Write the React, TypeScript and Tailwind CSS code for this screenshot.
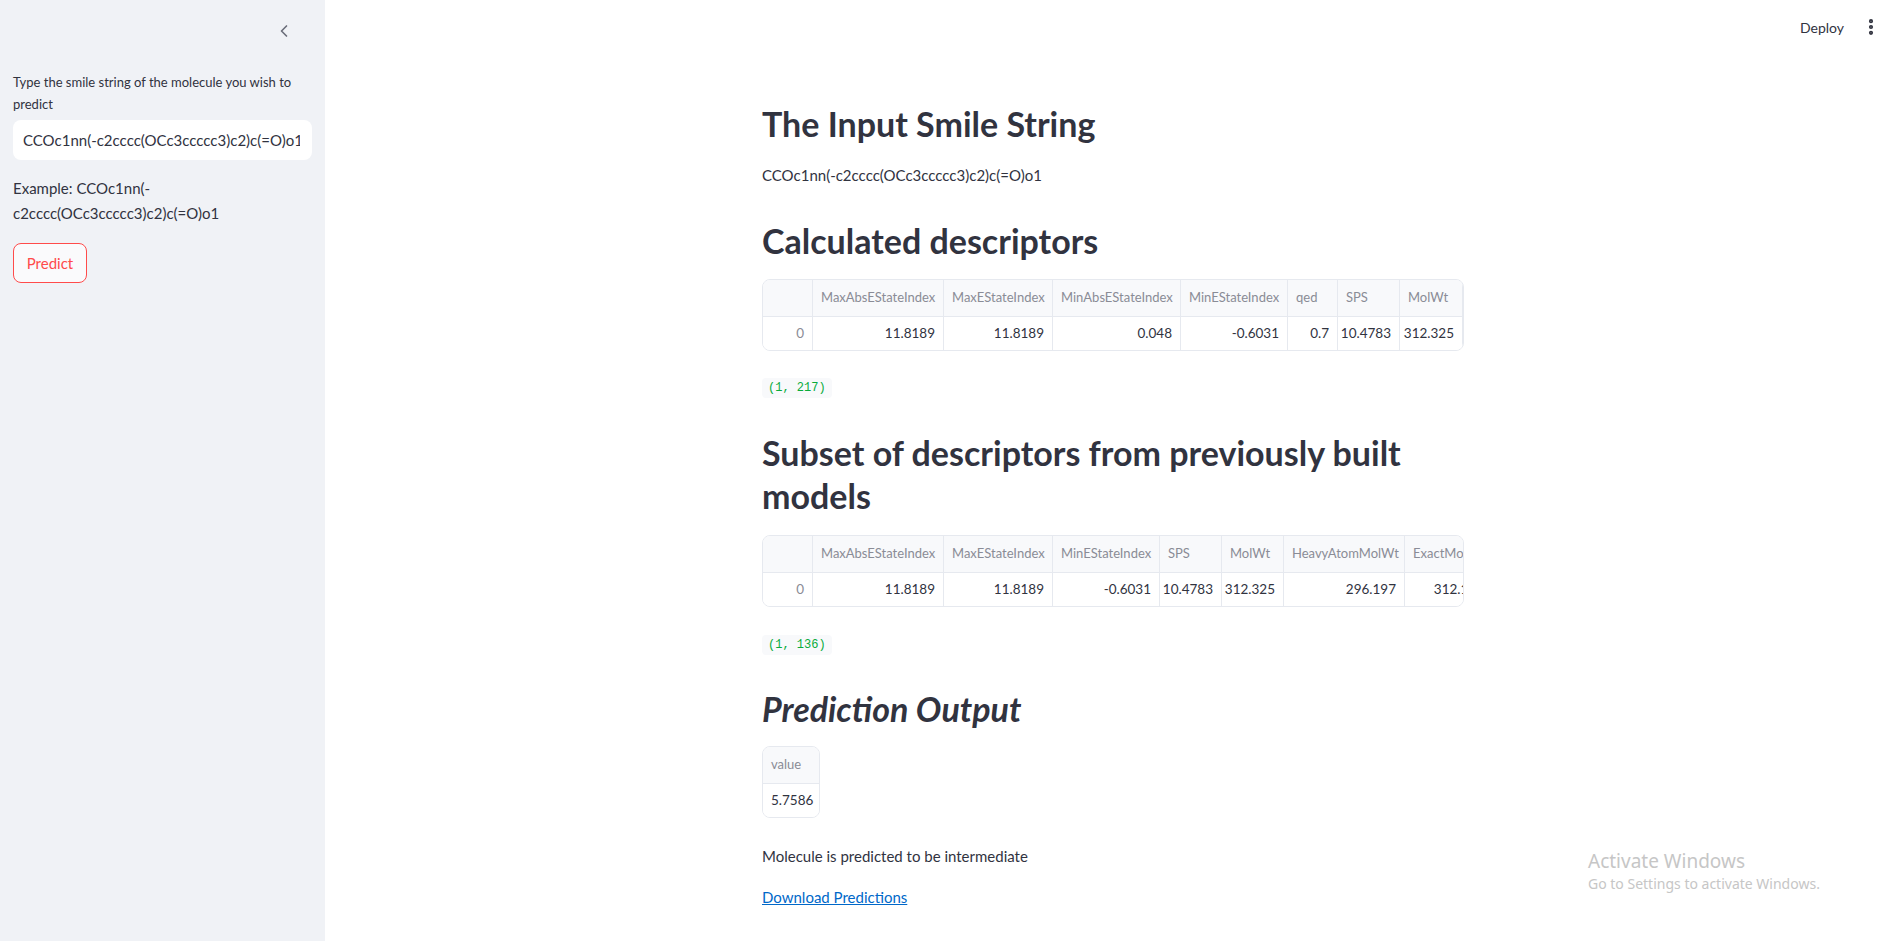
import { ChevronLeft, EllipsisVertical } from 'lucide-react'

type Col = { label: string; value: string; w: number }

const calculated: Col[] = [
  { label: 'MaxAbsEStateIndex', value: '11.8189', w: 131 },
  { label: 'MaxEStateIndex', value: '11.8189', w: 109 },
  { label: 'MinAbsEStateIndex', value: '0.048', w: 128 },
  { label: 'MinEStateIndex', value: '-0.6031', w: 107 },
  { label: 'qed', value: '0.7', w: 50 },
  { label: 'SPS', value: '10.4783', w: 62 },
  { label: 'MolWt', value: '312.325', w: 63 },
  { label: 'HeavyAtomMolWt', value: '296.197', w: 121 },
]

const subset: Col[] = [
  { label: 'MaxAbsEStateIndex', value: '11.8189', w: 131 },
  { label: 'MaxEStateIndex', value: '11.8189', w: 109 },
  { label: 'MinEStateIndex', value: '-0.6031', w: 107 },
  { label: 'SPS', value: '10.4783', w: 62 },
  { label: 'MolWt', value: '312.325', w: 62 },
  { label: 'HeavyAtomMolWt', value: '296.197', w: 121 },
  { label: 'ExactMolWt', value: '312.111', w: 88 },
  { label: 'NumValenceElectrons', value: '118', w: 140 },
]

function DataTable({ cols, index = true, full = true }: { cols: Col[]; index?: boolean; full?: boolean }) {
  return (
    <div className={`overflow-hidden rounded-lg border border-[#e6e9ef] ${full ? 'w-full' : 'w-fit'}`}>
      <div className="flex h-[37px] border-b border-[#e6e9ef] bg-[#f8f9fb] text-[13px] text-[#8a8c96]">
        {index && <div className="w-[50px] shrink-0 border-r border-[#e6e9ef]" />}
        {cols.map((c, i) => (
          <div
            key={c.label}
            className={`flex shrink-0 items-center overflow-hidden whitespace-nowrap px-2 ${
              full || i < cols.length - 1 ? 'border-r border-[#e6e9ef]' : ''
            }`}
            style={{ width: c.w }}
          >
            {c.label}
          </div>
        ))}
      </div>
      <div className="flex h-[33px] bg-white text-[13.5px] text-[#31333f]">
        {index && (
          <div className="flex w-[50px] shrink-0 items-center justify-end border-r border-[#e6e9ef] px-2 text-[#8a8c96]">
            0
          </div>
        )}
        {cols.map((c, i) => (
          <div
            key={c.label}
            className={`flex shrink-0 items-center overflow-hidden whitespace-nowrap px-2 ${
              index ? 'justify-end' : 'justify-start'
            } ${full || i < cols.length - 1 ? 'border-r border-[#e6e9ef]' : ''}`}
            style={{ width: c.w }}
          >
            {c.value}
          </div>
        ))}
      </div>
    </div>
  )
}

function Shape({ text }: { text: string }) {
  return (
    <div className="flex h-[20px] w-fit items-center rounded bg-[#f8f9fb] px-[6px] font-['Liberation_Mono',monospace] text-[12px] text-[#09ab3b]">
      {text}
    </div>
  )
}

export default function App() {
  return (
    <div className="flex h-screen w-full overflow-hidden bg-white font-['Lato',sans-serif] text-[#31333f]">
      <aside className="w-[325px] shrink-0 bg-[#f0f2f6] px-[13px]">
        <div className="flex justify-end pr-[18px] pt-[21px]">
          <ChevronLeft size={20} strokeWidth={2} className="text-[#6b6e7a]" />
        </div>
        <label className="mt-[30px] block text-[13px] leading-[22px]">
          <span className="whitespace-nowrap">Type the smile string of the molecule you wish to</span>
          <br />
          predict
        </label>
        <div className="mt-[5px] flex h-[40px] items-center overflow-hidden whitespace-nowrap rounded-lg bg-white pl-[10px] pr-[12px] text-[15px]">
          <span className="overflow-hidden">CCOc1nn(-c2cccc(OCc3ccccc3)c2)c(=O)o1</span>
        </div>
        <p className="mt-[16px] text-[15px] leading-[25px]">Example: CCOc1nn(-c2cccc(OCc3ccccc3)c2)c(=O)o1</p>
        <button className="mt-[17px] flex h-[40px] w-[74px] items-center justify-center rounded-lg border border-[#ff4b4b] bg-[#fafafc] text-[15px] text-[#ff4b4b]">
          Predict
        </button>
      </aside>

      <main className="relative flex-1 overflow-hidden">
        <header className="flex h-[54px] items-center justify-end gap-[17px] pr-[20px]">
          <span className="text-[14px]">Deploy</span>
          <EllipsisVertical size={20} strokeWidth={3} className="text-[#31333f]" />
        </header>

        <div className="mx-auto w-[702px] pt-[48px]">
          <h2 className="text-[34px] font-bold leading-[44px]">The Input Smile String</h2>
          <p className="mt-[17px] text-[15px] leading-[24px]">CCOc1nn(-c2cccc(OCc3ccccc3)c2)c(=O)o1</p>

          <h2 className="mt-[32px] text-[34px] font-bold leading-[44px]">Calculated descriptors</h2>
          <div className="mt-[16px]">
            <DataTable cols={calculated} />
          </div>
          <div className="mt-[27px]">
            <Shape text="(1, 217)" />
          </div>

          <h2 className="mt-[33px] text-[34px] font-bold leading-[43px]">
            Subset of descriptors from previously built models
          </h2>
          <div className="mt-[18px]">
            <DataTable cols={subset} />
          </div>
          <div className="mt-[28px]">
            <Shape text="(1, 136)" />
          </div>

          <h2 className="mt-[32px] text-[34px] font-bold italic leading-[44px]">Prediction Output</h2>
          <div className="mt-[15px]">
            <DataTable cols={[{ label: 'value', value: '5.7586', w: 56 }]} index={false} full={false} />
          </div>
          <p className="mt-[26px] text-[15px] leading-[24px]">Molecule is predicted to be intermediate</p>
          <a href="#" className="mt-[17px] block w-fit text-[15px] leading-[24px] text-[#0068c9] underline">
            Download Predictions
          </a>
        </div>

        <div className="absolute left-[1263px] top-[848px] font-['Noto_Sans',sans-serif] text-[#c6c6c6]">
          <div className="text-[19px] leading-[26px]">Activate Windows</div>
          <div className="text-[14px] leading-[19px]">Go to Settings to activate Windows.</div>
        </div>
      </main>
    </div>
  )
}
